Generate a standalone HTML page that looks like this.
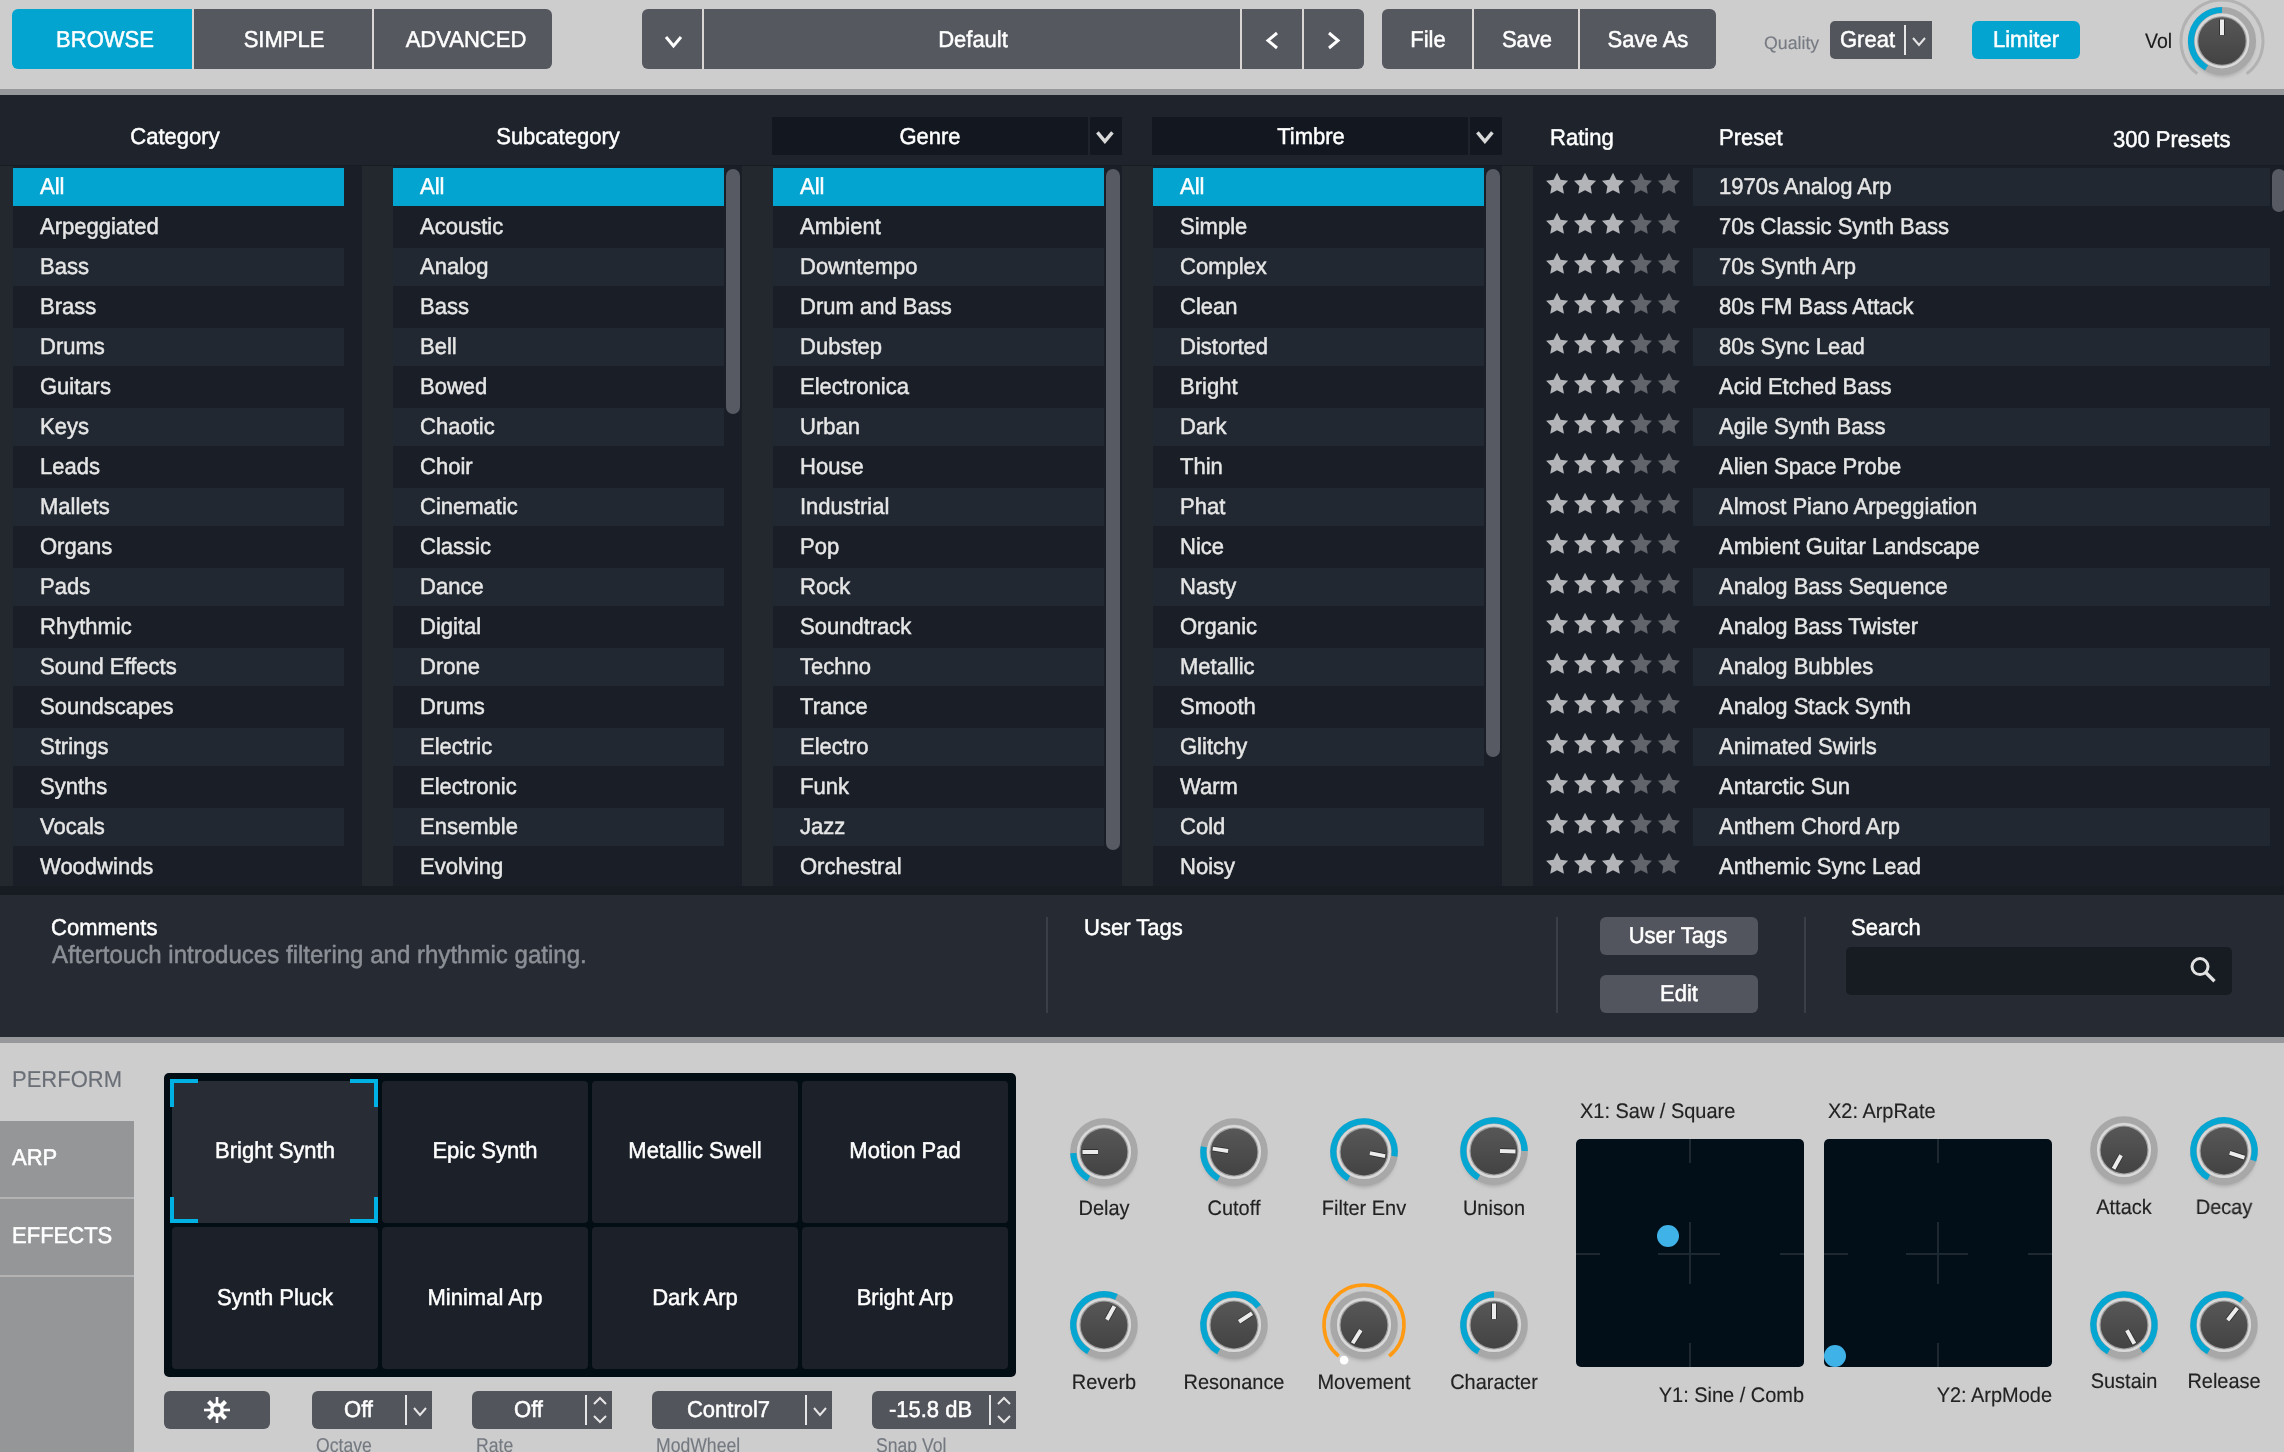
<!DOCTYPE html>
<html><head><meta charset="utf-8"><style>
html,body{margin:0;padding:0;}
body{width:2284px;height:1452px;overflow:hidden;position:relative;background:#cdcdcd;font-family:"Liberation Sans",sans-serif;}
body>div,body>svg{position:absolute;}
#tx{position:absolute;left:0;top:0;width:2284px;height:1452px;will-change:transform;}
#tx>div{position:absolute;white-space:nowrap;-webkit-text-stroke:0.5px currentColor;text-rendering:geometricPrecision;}
</style></head><body>
<div style="left:0px;top:0px;width:2284px;height:89px;background:#cdcdcd;"></div>
<div style="left:0px;top:89px;width:2284px;height:6px;background:#97989b;"></div>
<div style="left:12px;top:9px;width:180px;height:60px;background:#03a4cf;border-radius:6px 0 0 6px;"></div>
<div style="left:192px;top:9px;width:2px;height:60px;background:#d9d6d4;"></div>
<div style="left:194px;top:9px;width:178px;height:60px;background:#55585f;"></div>
<div style="left:372px;top:9px;width:2px;height:60px;background:#d9d6d4;"></div>
<div style="left:374px;top:9px;width:178px;height:60px;background:#55585f;border-radius:0 6px 6px 0;"></div>
<div style="left:642px;top:9px;width:60px;height:60px;background:#55585f;border-radius:6px 0 0 6px;"></div>
<div style="left:702px;top:9px;width:2px;height:60px;background:#d9d6d4;"></div>
<div style="left:704px;top:9px;width:536px;height:60px;background:#55585f;"></div>
<div style="left:1240px;top:9px;width:2px;height:60px;background:#d9d6d4;"></div>
<div style="left:1242px;top:9px;width:60px;height:60px;background:#55585f;"></div>
<div style="left:1302px;top:9px;width:2px;height:60px;background:#d9d6d4;"></div>
<div style="left:1304px;top:9px;width:60px;height:60px;background:#55585f;border-radius:0 6px 6px 0;"></div>
<svg style="left:662.5px;top:33.5px" width="21" height="15"><polyline points="3,3 10.5,12 18,3" fill="none" stroke="#fff" stroke-width="3" stroke-linecap="butt" stroke-linejoin="miter"/></svg>
<svg style="left:1264.5px;top:29.5px" width="15" height="21"><polyline points="12,3 3,10.5 12,18" fill="none" stroke="#fff" stroke-width="3" stroke-linecap="butt" stroke-linejoin="miter"/></svg>
<svg style="left:1325.5px;top:29.5px" width="15" height="21"><polyline points="3,3 12,10.5 3,18" fill="none" stroke="#fff" stroke-width="3" stroke-linecap="butt" stroke-linejoin="miter"/></svg>
<div style="left:1382px;top:9px;width:90px;height:60px;background:#55585f;border-radius:6px 0 0 6px;"></div>
<div style="left:1472px;top:9px;width:2px;height:60px;background:#d9d6d4;"></div>
<div style="left:1474px;top:9px;width:104px;height:60px;background:#55585f;"></div>
<div style="left:1578px;top:9px;width:2px;height:60px;background:#d9d6d4;"></div>
<div style="left:1580px;top:9px;width:136px;height:60px;background:#55585f;border-radius:0 6px 6px 0;"></div>
<div style="left:1830px;top:21px;width:102px;height:38px;background:#52555c;border-radius:5px 0 0 5px;"></div>
<div style="left:1904px;top:25px;width:2px;height:30px;background:#e6e6e6;"></div>
<svg style="left:1911.0px;top:35.5px" width="16" height="11"><polyline points="2,2 8.0,9 14,2" fill="none" stroke="#e6e6e6" stroke-width="2" stroke-linecap="butt" stroke-linejoin="miter"/></svg>
<div style="left:1972px;top:21px;width:108px;height:38px;background:#03a4cf;border-radius:6px;"></div>
<svg style="left:2172.0px;top:-9.0px" width="100" height="100" viewBox="-50.0 -50.0 100 100"><defs><linearGradient id="kg1" x1="0" y1="0" x2="0" y2="1"><stop offset="0" stop-color="#575757"/><stop offset="1" stop-color="#434343"/></linearGradient><filter id="kf1" x="-50%" y="-50%" width="200%" height="200%"><feGaussianBlur stdDeviation="2.2"/></filter></defs><path d="M-24.67,32.74 A41,41 0 1 1 24.67,32.74" fill="none" stroke="#b2b2b2" stroke-width="3"/><circle cx="0" cy="4" r="31.5" fill="#a3a3a3" filter="url(#kf1)"/><circle cx="0" cy="0" r="31" fill="none" stroke="#a8a8a8" stroke-width="6.2"/><path d="M-15.50,26.85 A31,31 0 0 1 0.00,-31.00" fill="none" stroke="#06a6d3" stroke-width="6.2"/><circle cx="0" cy="0" r="25.9" fill="none" stroke="#d9d9d9" stroke-width="3"/><circle cx="0" cy="0" r="24.2" fill="none" stroke="#a0a0a0" stroke-width="1.3"/><circle cx="0" cy="0" r="23.7" fill="url(#kg1)"/><line x1="0.00" y1="-6.00" x2="0.00" y2="-21.50" stroke="#2a2a2a" stroke-width="5.5"/><line x1="0.00" y1="-6.00" x2="0.00" y2="-21.50" stroke="#ececec" stroke-width="4"/></svg>
<div style="left:0px;top:95px;width:2284px;height:71px;background:#1e232c;"></div>
<div style="left:0px;top:165px;width:2284px;height:3px;background:#181c22;"></div>
<div style="left:0px;top:166px;width:2284px;height:720px;background:#1a1f27;"></div>
<div style="left:0px;top:166px;width:13px;height:720px;background:#23282f;"></div>
<div style="left:362px;top:166px;width:31px;height:720px;background:#23282f;"></div>
<div style="left:742px;top:166px;width:31px;height:720px;background:#23282f;"></div>
<div style="left:1122px;top:166px;width:31px;height:720px;background:#23282f;"></div>
<div style="left:1502px;top:166px;width:31px;height:720px;background:#23282f;"></div>
<div style="left:0px;top:886px;width:2284px;height:9px;background:#171b22;"></div>
<div style="left:13px;top:168px;width:331px;height:38px;background:#03a4cf;"></div>
<div style="left:13px;top:248px;width:331px;height:38px;background:#212831;"></div>
<div style="left:13px;top:328px;width:331px;height:38px;background:#212831;"></div>
<div style="left:13px;top:408px;width:331px;height:38px;background:#212831;"></div>
<div style="left:13px;top:488px;width:331px;height:38px;background:#212831;"></div>
<div style="left:13px;top:568px;width:331px;height:38px;background:#212831;"></div>
<div style="left:13px;top:648px;width:331px;height:38px;background:#212831;"></div>
<div style="left:13px;top:728px;width:331px;height:38px;background:#212831;"></div>
<div style="left:13px;top:808px;width:331px;height:38px;background:#212831;"></div>
<div style="left:393px;top:168px;width:331px;height:38px;background:#03a4cf;"></div>
<div style="left:393px;top:248px;width:331px;height:38px;background:#212831;"></div>
<div style="left:393px;top:328px;width:331px;height:38px;background:#212831;"></div>
<div style="left:393px;top:408px;width:331px;height:38px;background:#212831;"></div>
<div style="left:393px;top:488px;width:331px;height:38px;background:#212831;"></div>
<div style="left:393px;top:568px;width:331px;height:38px;background:#212831;"></div>
<div style="left:393px;top:648px;width:331px;height:38px;background:#212831;"></div>
<div style="left:393px;top:728px;width:331px;height:38px;background:#212831;"></div>
<div style="left:393px;top:808px;width:331px;height:38px;background:#212831;"></div>
<div style="left:773px;top:168px;width:331px;height:38px;background:#03a4cf;"></div>
<div style="left:773px;top:248px;width:331px;height:38px;background:#212831;"></div>
<div style="left:773px;top:328px;width:331px;height:38px;background:#212831;"></div>
<div style="left:773px;top:408px;width:331px;height:38px;background:#212831;"></div>
<div style="left:773px;top:488px;width:331px;height:38px;background:#212831;"></div>
<div style="left:773px;top:568px;width:331px;height:38px;background:#212831;"></div>
<div style="left:773px;top:648px;width:331px;height:38px;background:#212831;"></div>
<div style="left:773px;top:728px;width:331px;height:38px;background:#212831;"></div>
<div style="left:773px;top:808px;width:331px;height:38px;background:#212831;"></div>
<div style="left:1153px;top:168px;width:331px;height:38px;background:#03a4cf;"></div>
<div style="left:1153px;top:248px;width:331px;height:38px;background:#212831;"></div>
<div style="left:1153px;top:328px;width:331px;height:38px;background:#212831;"></div>
<div style="left:1153px;top:408px;width:331px;height:38px;background:#212831;"></div>
<div style="left:1153px;top:488px;width:331px;height:38px;background:#212831;"></div>
<div style="left:1153px;top:568px;width:331px;height:38px;background:#212831;"></div>
<div style="left:1153px;top:648px;width:331px;height:38px;background:#212831;"></div>
<div style="left:1153px;top:728px;width:331px;height:38px;background:#212831;"></div>
<div style="left:1153px;top:808px;width:331px;height:38px;background:#212831;"></div>
<div style="left:1693px;top:168px;width:577px;height:38px;background:#212831;"></div>
<div style="left:1693px;top:248px;width:577px;height:38px;background:#212831;"></div>
<div style="left:1693px;top:328px;width:577px;height:38px;background:#212831;"></div>
<div style="left:1693px;top:408px;width:577px;height:38px;background:#212831;"></div>
<div style="left:1693px;top:488px;width:577px;height:38px;background:#212831;"></div>
<div style="left:1693px;top:568px;width:577px;height:38px;background:#212831;"></div>
<div style="left:1693px;top:648px;width:577px;height:38px;background:#212831;"></div>
<div style="left:1693px;top:728px;width:577px;height:38px;background:#212831;"></div>
<div style="left:1693px;top:808px;width:577px;height:38px;background:#212831;"></div>
<div style="left:726px;top:169px;width:14px;height:245px;background:#575a62;border-radius:7px;"></div>
<div style="left:1106px;top:169px;width:14px;height:681px;background:#575a62;border-radius:7px;"></div>
<div style="left:1486px;top:169px;width:14px;height:588px;background:#575a62;border-radius:7px;"></div>
<div style="left:2272px;top:169px;width:14px;height:43px;background:#575a62;border-radius:7px;"></div>
<svg style="left:1533px;top:166px" width="160" height="720"><path d="M24.10,6.80 L27.57,13.63 L35.13,14.82 L29.71,20.22 L30.92,27.78 L24.10,24.30 L17.28,27.78 L18.49,20.22 L13.07,14.82 L20.63,13.63Z" fill="#b3b4b8"/><path d="M52.05,6.80 L55.52,13.63 L63.08,14.82 L57.66,20.22 L58.87,27.78 L52.05,24.30 L45.23,27.78 L46.44,20.22 L41.02,14.82 L48.58,13.63Z" fill="#b3b4b8"/><path d="M80.00,6.80 L83.47,13.63 L91.03,14.82 L85.61,20.22 L86.82,27.78 L80.00,24.30 L73.18,27.78 L74.39,20.22 L68.97,14.82 L76.53,13.63Z" fill="#b3b4b8"/><path d="M107.95,6.80 L111.42,13.63 L118.98,14.82 L113.56,20.22 L114.77,27.78 L107.95,24.30 L101.13,27.78 L102.34,20.22 L96.92,14.82 L104.48,13.63Z" fill="#62656c"/><path d="M135.90,6.80 L139.37,13.63 L146.93,14.82 L141.51,20.22 L142.72,27.78 L135.90,24.30 L129.08,27.78 L130.29,20.22 L124.87,14.82 L132.43,13.63Z" fill="#62656c"/><path d="M24.10,46.80 L27.57,53.63 L35.13,54.82 L29.71,60.22 L30.92,67.78 L24.10,64.30 L17.28,67.78 L18.49,60.22 L13.07,54.82 L20.63,53.63Z" fill="#b3b4b8"/><path d="M52.05,46.80 L55.52,53.63 L63.08,54.82 L57.66,60.22 L58.87,67.78 L52.05,64.30 L45.23,67.78 L46.44,60.22 L41.02,54.82 L48.58,53.63Z" fill="#b3b4b8"/><path d="M80.00,46.80 L83.47,53.63 L91.03,54.82 L85.61,60.22 L86.82,67.78 L80.00,64.30 L73.18,67.78 L74.39,60.22 L68.97,54.82 L76.53,53.63Z" fill="#b3b4b8"/><path d="M107.95,46.80 L111.42,53.63 L118.98,54.82 L113.56,60.22 L114.77,67.78 L107.95,64.30 L101.13,67.78 L102.34,60.22 L96.92,54.82 L104.48,53.63Z" fill="#62656c"/><path d="M135.90,46.80 L139.37,53.63 L146.93,54.82 L141.51,60.22 L142.72,67.78 L135.90,64.30 L129.08,67.78 L130.29,60.22 L124.87,54.82 L132.43,53.63Z" fill="#62656c"/><path d="M24.10,86.80 L27.57,93.63 L35.13,94.82 L29.71,100.22 L30.92,107.78 L24.10,104.30 L17.28,107.78 L18.49,100.22 L13.07,94.82 L20.63,93.63Z" fill="#b3b4b8"/><path d="M52.05,86.80 L55.52,93.63 L63.08,94.82 L57.66,100.22 L58.87,107.78 L52.05,104.30 L45.23,107.78 L46.44,100.22 L41.02,94.82 L48.58,93.63Z" fill="#b3b4b8"/><path d="M80.00,86.80 L83.47,93.63 L91.03,94.82 L85.61,100.22 L86.82,107.78 L80.00,104.30 L73.18,107.78 L74.39,100.22 L68.97,94.82 L76.53,93.63Z" fill="#b3b4b8"/><path d="M107.95,86.80 L111.42,93.63 L118.98,94.82 L113.56,100.22 L114.77,107.78 L107.95,104.30 L101.13,107.78 L102.34,100.22 L96.92,94.82 L104.48,93.63Z" fill="#62656c"/><path d="M135.90,86.80 L139.37,93.63 L146.93,94.82 L141.51,100.22 L142.72,107.78 L135.90,104.30 L129.08,107.78 L130.29,100.22 L124.87,94.82 L132.43,93.63Z" fill="#62656c"/><path d="M24.10,126.80 L27.57,133.63 L35.13,134.82 L29.71,140.22 L30.92,147.78 L24.10,144.30 L17.28,147.78 L18.49,140.22 L13.07,134.82 L20.63,133.63Z" fill="#b3b4b8"/><path d="M52.05,126.80 L55.52,133.63 L63.08,134.82 L57.66,140.22 L58.87,147.78 L52.05,144.30 L45.23,147.78 L46.44,140.22 L41.02,134.82 L48.58,133.63Z" fill="#b3b4b8"/><path d="M80.00,126.80 L83.47,133.63 L91.03,134.82 L85.61,140.22 L86.82,147.78 L80.00,144.30 L73.18,147.78 L74.39,140.22 L68.97,134.82 L76.53,133.63Z" fill="#b3b4b8"/><path d="M107.95,126.80 L111.42,133.63 L118.98,134.82 L113.56,140.22 L114.77,147.78 L107.95,144.30 L101.13,147.78 L102.34,140.22 L96.92,134.82 L104.48,133.63Z" fill="#62656c"/><path d="M135.90,126.80 L139.37,133.63 L146.93,134.82 L141.51,140.22 L142.72,147.78 L135.90,144.30 L129.08,147.78 L130.29,140.22 L124.87,134.82 L132.43,133.63Z" fill="#62656c"/><path d="M24.10,166.80 L27.57,173.63 L35.13,174.82 L29.71,180.22 L30.92,187.78 L24.10,184.30 L17.28,187.78 L18.49,180.22 L13.07,174.82 L20.63,173.63Z" fill="#b3b4b8"/><path d="M52.05,166.80 L55.52,173.63 L63.08,174.82 L57.66,180.22 L58.87,187.78 L52.05,184.30 L45.23,187.78 L46.44,180.22 L41.02,174.82 L48.58,173.63Z" fill="#b3b4b8"/><path d="M80.00,166.80 L83.47,173.63 L91.03,174.82 L85.61,180.22 L86.82,187.78 L80.00,184.30 L73.18,187.78 L74.39,180.22 L68.97,174.82 L76.53,173.63Z" fill="#b3b4b8"/><path d="M107.95,166.80 L111.42,173.63 L118.98,174.82 L113.56,180.22 L114.77,187.78 L107.95,184.30 L101.13,187.78 L102.34,180.22 L96.92,174.82 L104.48,173.63Z" fill="#62656c"/><path d="M135.90,166.80 L139.37,173.63 L146.93,174.82 L141.51,180.22 L142.72,187.78 L135.90,184.30 L129.08,187.78 L130.29,180.22 L124.87,174.82 L132.43,173.63Z" fill="#62656c"/><path d="M24.10,206.80 L27.57,213.63 L35.13,214.82 L29.71,220.22 L30.92,227.78 L24.10,224.30 L17.28,227.78 L18.49,220.22 L13.07,214.82 L20.63,213.63Z" fill="#b3b4b8"/><path d="M52.05,206.80 L55.52,213.63 L63.08,214.82 L57.66,220.22 L58.87,227.78 L52.05,224.30 L45.23,227.78 L46.44,220.22 L41.02,214.82 L48.58,213.63Z" fill="#b3b4b8"/><path d="M80.00,206.80 L83.47,213.63 L91.03,214.82 L85.61,220.22 L86.82,227.78 L80.00,224.30 L73.18,227.78 L74.39,220.22 L68.97,214.82 L76.53,213.63Z" fill="#b3b4b8"/><path d="M107.95,206.80 L111.42,213.63 L118.98,214.82 L113.56,220.22 L114.77,227.78 L107.95,224.30 L101.13,227.78 L102.34,220.22 L96.92,214.82 L104.48,213.63Z" fill="#62656c"/><path d="M135.90,206.80 L139.37,213.63 L146.93,214.82 L141.51,220.22 L142.72,227.78 L135.90,224.30 L129.08,227.78 L130.29,220.22 L124.87,214.82 L132.43,213.63Z" fill="#62656c"/><path d="M24.10,246.80 L27.57,253.63 L35.13,254.82 L29.71,260.22 L30.92,267.78 L24.10,264.30 L17.28,267.78 L18.49,260.22 L13.07,254.82 L20.63,253.63Z" fill="#b3b4b8"/><path d="M52.05,246.80 L55.52,253.63 L63.08,254.82 L57.66,260.22 L58.87,267.78 L52.05,264.30 L45.23,267.78 L46.44,260.22 L41.02,254.82 L48.58,253.63Z" fill="#b3b4b8"/><path d="M80.00,246.80 L83.47,253.63 L91.03,254.82 L85.61,260.22 L86.82,267.78 L80.00,264.30 L73.18,267.78 L74.39,260.22 L68.97,254.82 L76.53,253.63Z" fill="#b3b4b8"/><path d="M107.95,246.80 L111.42,253.63 L118.98,254.82 L113.56,260.22 L114.77,267.78 L107.95,264.30 L101.13,267.78 L102.34,260.22 L96.92,254.82 L104.48,253.63Z" fill="#62656c"/><path d="M135.90,246.80 L139.37,253.63 L146.93,254.82 L141.51,260.22 L142.72,267.78 L135.90,264.30 L129.08,267.78 L130.29,260.22 L124.87,254.82 L132.43,253.63Z" fill="#62656c"/><path d="M24.10,286.80 L27.57,293.63 L35.13,294.82 L29.71,300.22 L30.92,307.78 L24.10,304.30 L17.28,307.78 L18.49,300.22 L13.07,294.82 L20.63,293.63Z" fill="#b3b4b8"/><path d="M52.05,286.80 L55.52,293.63 L63.08,294.82 L57.66,300.22 L58.87,307.78 L52.05,304.30 L45.23,307.78 L46.44,300.22 L41.02,294.82 L48.58,293.63Z" fill="#b3b4b8"/><path d="M80.00,286.80 L83.47,293.63 L91.03,294.82 L85.61,300.22 L86.82,307.78 L80.00,304.30 L73.18,307.78 L74.39,300.22 L68.97,294.82 L76.53,293.63Z" fill="#b3b4b8"/><path d="M107.95,286.80 L111.42,293.63 L118.98,294.82 L113.56,300.22 L114.77,307.78 L107.95,304.30 L101.13,307.78 L102.34,300.22 L96.92,294.82 L104.48,293.63Z" fill="#62656c"/><path d="M135.90,286.80 L139.37,293.63 L146.93,294.82 L141.51,300.22 L142.72,307.78 L135.90,304.30 L129.08,307.78 L130.29,300.22 L124.87,294.82 L132.43,293.63Z" fill="#62656c"/><path d="M24.10,326.80 L27.57,333.63 L35.13,334.82 L29.71,340.22 L30.92,347.78 L24.10,344.30 L17.28,347.78 L18.49,340.22 L13.07,334.82 L20.63,333.63Z" fill="#b3b4b8"/><path d="M52.05,326.80 L55.52,333.63 L63.08,334.82 L57.66,340.22 L58.87,347.78 L52.05,344.30 L45.23,347.78 L46.44,340.22 L41.02,334.82 L48.58,333.63Z" fill="#b3b4b8"/><path d="M80.00,326.80 L83.47,333.63 L91.03,334.82 L85.61,340.22 L86.82,347.78 L80.00,344.30 L73.18,347.78 L74.39,340.22 L68.97,334.82 L76.53,333.63Z" fill="#b3b4b8"/><path d="M107.95,326.80 L111.42,333.63 L118.98,334.82 L113.56,340.22 L114.77,347.78 L107.95,344.30 L101.13,347.78 L102.34,340.22 L96.92,334.82 L104.48,333.63Z" fill="#62656c"/><path d="M135.90,326.80 L139.37,333.63 L146.93,334.82 L141.51,340.22 L142.72,347.78 L135.90,344.30 L129.08,347.78 L130.29,340.22 L124.87,334.82 L132.43,333.63Z" fill="#62656c"/><path d="M24.10,366.80 L27.57,373.63 L35.13,374.82 L29.71,380.22 L30.92,387.78 L24.10,384.30 L17.28,387.78 L18.49,380.22 L13.07,374.82 L20.63,373.63Z" fill="#b3b4b8"/><path d="M52.05,366.80 L55.52,373.63 L63.08,374.82 L57.66,380.22 L58.87,387.78 L52.05,384.30 L45.23,387.78 L46.44,380.22 L41.02,374.82 L48.58,373.63Z" fill="#b3b4b8"/><path d="M80.00,366.80 L83.47,373.63 L91.03,374.82 L85.61,380.22 L86.82,387.78 L80.00,384.30 L73.18,387.78 L74.39,380.22 L68.97,374.82 L76.53,373.63Z" fill="#b3b4b8"/><path d="M107.95,366.80 L111.42,373.63 L118.98,374.82 L113.56,380.22 L114.77,387.78 L107.95,384.30 L101.13,387.78 L102.34,380.22 L96.92,374.82 L104.48,373.63Z" fill="#62656c"/><path d="M135.90,366.80 L139.37,373.63 L146.93,374.82 L141.51,380.22 L142.72,387.78 L135.90,384.30 L129.08,387.78 L130.29,380.22 L124.87,374.82 L132.43,373.63Z" fill="#62656c"/><path d="M24.10,406.80 L27.57,413.63 L35.13,414.82 L29.71,420.22 L30.92,427.78 L24.10,424.30 L17.28,427.78 L18.49,420.22 L13.07,414.82 L20.63,413.63Z" fill="#b3b4b8"/><path d="M52.05,406.80 L55.52,413.63 L63.08,414.82 L57.66,420.22 L58.87,427.78 L52.05,424.30 L45.23,427.78 L46.44,420.22 L41.02,414.82 L48.58,413.63Z" fill="#b3b4b8"/><path d="M80.00,406.80 L83.47,413.63 L91.03,414.82 L85.61,420.22 L86.82,427.78 L80.00,424.30 L73.18,427.78 L74.39,420.22 L68.97,414.82 L76.53,413.63Z" fill="#b3b4b8"/><path d="M107.95,406.80 L111.42,413.63 L118.98,414.82 L113.56,420.22 L114.77,427.78 L107.95,424.30 L101.13,427.78 L102.34,420.22 L96.92,414.82 L104.48,413.63Z" fill="#62656c"/><path d="M135.90,406.80 L139.37,413.63 L146.93,414.82 L141.51,420.22 L142.72,427.78 L135.90,424.30 L129.08,427.78 L130.29,420.22 L124.87,414.82 L132.43,413.63Z" fill="#62656c"/><path d="M24.10,446.80 L27.57,453.63 L35.13,454.82 L29.71,460.22 L30.92,467.78 L24.10,464.30 L17.28,467.78 L18.49,460.22 L13.07,454.82 L20.63,453.63Z" fill="#b3b4b8"/><path d="M52.05,446.80 L55.52,453.63 L63.08,454.82 L57.66,460.22 L58.87,467.78 L52.05,464.30 L45.23,467.78 L46.44,460.22 L41.02,454.82 L48.58,453.63Z" fill="#b3b4b8"/><path d="M80.00,446.80 L83.47,453.63 L91.03,454.82 L85.61,460.22 L86.82,467.78 L80.00,464.30 L73.18,467.78 L74.39,460.22 L68.97,454.82 L76.53,453.63Z" fill="#b3b4b8"/><path d="M107.95,446.80 L111.42,453.63 L118.98,454.82 L113.56,460.22 L114.77,467.78 L107.95,464.30 L101.13,467.78 L102.34,460.22 L96.92,454.82 L104.48,453.63Z" fill="#62656c"/><path d="M135.90,446.80 L139.37,453.63 L146.93,454.82 L141.51,460.22 L142.72,467.78 L135.90,464.30 L129.08,467.78 L130.29,460.22 L124.87,454.82 L132.43,453.63Z" fill="#62656c"/><path d="M24.10,486.80 L27.57,493.63 L35.13,494.82 L29.71,500.22 L30.92,507.78 L24.10,504.30 L17.28,507.78 L18.49,500.22 L13.07,494.82 L20.63,493.63Z" fill="#b3b4b8"/><path d="M52.05,486.80 L55.52,493.63 L63.08,494.82 L57.66,500.22 L58.87,507.78 L52.05,504.30 L45.23,507.78 L46.44,500.22 L41.02,494.82 L48.58,493.63Z" fill="#b3b4b8"/><path d="M80.00,486.80 L83.47,493.63 L91.03,494.82 L85.61,500.22 L86.82,507.78 L80.00,504.30 L73.18,507.78 L74.39,500.22 L68.97,494.82 L76.53,493.63Z" fill="#b3b4b8"/><path d="M107.95,486.80 L111.42,493.63 L118.98,494.82 L113.56,500.22 L114.77,507.78 L107.95,504.30 L101.13,507.78 L102.34,500.22 L96.92,494.82 L104.48,493.63Z" fill="#62656c"/><path d="M135.90,486.80 L139.37,493.63 L146.93,494.82 L141.51,500.22 L142.72,507.78 L135.90,504.30 L129.08,507.78 L130.29,500.22 L124.87,494.82 L132.43,493.63Z" fill="#62656c"/><path d="M24.10,526.80 L27.57,533.63 L35.13,534.82 L29.71,540.22 L30.92,547.78 L24.10,544.30 L17.28,547.78 L18.49,540.22 L13.07,534.82 L20.63,533.63Z" fill="#b3b4b8"/><path d="M52.05,526.80 L55.52,533.63 L63.08,534.82 L57.66,540.22 L58.87,547.78 L52.05,544.30 L45.23,547.78 L46.44,540.22 L41.02,534.82 L48.58,533.63Z" fill="#b3b4b8"/><path d="M80.00,526.80 L83.47,533.63 L91.03,534.82 L85.61,540.22 L86.82,547.78 L80.00,544.30 L73.18,547.78 L74.39,540.22 L68.97,534.82 L76.53,533.63Z" fill="#b3b4b8"/><path d="M107.95,526.80 L111.42,533.63 L118.98,534.82 L113.56,540.22 L114.77,547.78 L107.95,544.30 L101.13,547.78 L102.34,540.22 L96.92,534.82 L104.48,533.63Z" fill="#62656c"/><path d="M135.90,526.80 L139.37,533.63 L146.93,534.82 L141.51,540.22 L142.72,547.78 L135.90,544.30 L129.08,547.78 L130.29,540.22 L124.87,534.82 L132.43,533.63Z" fill="#62656c"/><path d="M24.10,566.80 L27.57,573.63 L35.13,574.82 L29.71,580.22 L30.92,587.78 L24.10,584.30 L17.28,587.78 L18.49,580.22 L13.07,574.82 L20.63,573.63Z" fill="#b3b4b8"/><path d="M52.05,566.80 L55.52,573.63 L63.08,574.82 L57.66,580.22 L58.87,587.78 L52.05,584.30 L45.23,587.78 L46.44,580.22 L41.02,574.82 L48.58,573.63Z" fill="#b3b4b8"/><path d="M80.00,566.80 L83.47,573.63 L91.03,574.82 L85.61,580.22 L86.82,587.78 L80.00,584.30 L73.18,587.78 L74.39,580.22 L68.97,574.82 L76.53,573.63Z" fill="#b3b4b8"/><path d="M107.95,566.80 L111.42,573.63 L118.98,574.82 L113.56,580.22 L114.77,587.78 L107.95,584.30 L101.13,587.78 L102.34,580.22 L96.92,574.82 L104.48,573.63Z" fill="#62656c"/><path d="M135.90,566.80 L139.37,573.63 L146.93,574.82 L141.51,580.22 L142.72,587.78 L135.90,584.30 L129.08,587.78 L130.29,580.22 L124.87,574.82 L132.43,573.63Z" fill="#62656c"/><path d="M24.10,606.80 L27.57,613.63 L35.13,614.82 L29.71,620.22 L30.92,627.78 L24.10,624.30 L17.28,627.78 L18.49,620.22 L13.07,614.82 L20.63,613.63Z" fill="#b3b4b8"/><path d="M52.05,606.80 L55.52,613.63 L63.08,614.82 L57.66,620.22 L58.87,627.78 L52.05,624.30 L45.23,627.78 L46.44,620.22 L41.02,614.82 L48.58,613.63Z" fill="#b3b4b8"/><path d="M80.00,606.80 L83.47,613.63 L91.03,614.82 L85.61,620.22 L86.82,627.78 L80.00,624.30 L73.18,627.78 L74.39,620.22 L68.97,614.82 L76.53,613.63Z" fill="#b3b4b8"/><path d="M107.95,606.80 L111.42,613.63 L118.98,614.82 L113.56,620.22 L114.77,627.78 L107.95,624.30 L101.13,627.78 L102.34,620.22 L96.92,614.82 L104.48,613.63Z" fill="#62656c"/><path d="M135.90,606.80 L139.37,613.63 L146.93,614.82 L141.51,620.22 L142.72,627.78 L135.90,624.30 L129.08,627.78 L130.29,620.22 L124.87,614.82 L132.43,613.63Z" fill="#62656c"/><path d="M24.10,646.80 L27.57,653.63 L35.13,654.82 L29.71,660.22 L30.92,667.78 L24.10,664.30 L17.28,667.78 L18.49,660.22 L13.07,654.82 L20.63,653.63Z" fill="#b3b4b8"/><path d="M52.05,646.80 L55.52,653.63 L63.08,654.82 L57.66,660.22 L58.87,667.78 L52.05,664.30 L45.23,667.78 L46.44,660.22 L41.02,654.82 L48.58,653.63Z" fill="#b3b4b8"/><path d="M80.00,646.80 L83.47,653.63 L91.03,654.82 L85.61,660.22 L86.82,667.78 L80.00,664.30 L73.18,667.78 L74.39,660.22 L68.97,654.82 L76.53,653.63Z" fill="#b3b4b8"/><path d="M107.95,646.80 L111.42,653.63 L118.98,654.82 L113.56,660.22 L114.77,667.78 L107.95,664.30 L101.13,667.78 L102.34,660.22 L96.92,654.82 L104.48,653.63Z" fill="#62656c"/><path d="M135.90,646.80 L139.37,653.63 L146.93,654.82 L141.51,660.22 L142.72,667.78 L135.90,664.30 L129.08,667.78 L130.29,660.22 L124.87,654.82 L132.43,653.63Z" fill="#62656c"/><path d="M24.10,686.80 L27.57,693.63 L35.13,694.82 L29.71,700.22 L30.92,707.78 L24.10,704.30 L17.28,707.78 L18.49,700.22 L13.07,694.82 L20.63,693.63Z" fill="#b3b4b8"/><path d="M52.05,686.80 L55.52,693.63 L63.08,694.82 L57.66,700.22 L58.87,707.78 L52.05,704.30 L45.23,707.78 L46.44,700.22 L41.02,694.82 L48.58,693.63Z" fill="#b3b4b8"/><path d="M80.00,686.80 L83.47,693.63 L91.03,694.82 L85.61,700.22 L86.82,707.78 L80.00,704.30 L73.18,707.78 L74.39,700.22 L68.97,694.82 L76.53,693.63Z" fill="#b3b4b8"/><path d="M107.95,686.80 L111.42,693.63 L118.98,694.82 L113.56,700.22 L114.77,707.78 L107.95,704.30 L101.13,707.78 L102.34,700.22 L96.92,694.82 L104.48,693.63Z" fill="#62656c"/><path d="M135.90,686.80 L139.37,693.63 L146.93,694.82 L141.51,700.22 L142.72,707.78 L135.90,704.30 L129.08,707.78 L130.29,700.22 L124.87,694.82 L132.43,693.63Z" fill="#62656c"/></svg>
<div style="left:772px;top:117px;width:316px;height:38px;background:#131820;"></div>
<div style="left:1090px;top:117px;width:32px;height:38px;background:#131820;"></div>
<svg style="left:1094.1px;top:128.6px" width="21.8" height="15.8"><polyline points="3.4,3.4 10.9,12.4 18.4,3.4" fill="none" stroke="#d9d9d9" stroke-width="3.4" stroke-linecap="butt" stroke-linejoin="miter"/></svg>
<div style="left:1152px;top:117px;width:316px;height:38px;background:#131820;"></div>
<div style="left:1470px;top:117px;width:32px;height:38px;background:#131820;"></div>
<svg style="left:1474.1px;top:128.6px" width="21.8" height="15.8"><polyline points="3.4,3.4 10.9,12.4 18.4,3.4" fill="none" stroke="#d9d9d9" stroke-width="3.4" stroke-linecap="butt" stroke-linejoin="miter"/></svg>
<div style="left:0px;top:895px;width:2284px;height:142px;background:#252a33;"></div>
<div style="left:1046px;top:917px;width:2px;height:96px;background:#393e47;"></div>
<div style="left:1556px;top:917px;width:2px;height:96px;background:#393e47;"></div>
<div style="left:1804px;top:917px;width:2px;height:96px;background:#393e47;"></div>
<div style="left:1600px;top:917px;width:158px;height:38px;background:#52555d;border-radius:6px;"></div>
<div style="left:1600px;top:975px;width:158px;height:38px;background:#52555d;border-radius:6px;"></div>
<div style="left:1846px;top:947px;width:386px;height:48px;background:#171c23;border-radius:5px;"></div>
<svg style="left:2184px;top:950px" width="40" height="40"><circle cx="16" cy="16.6" r="8" fill="none" stroke="#e2e2e2" stroke-width="3"/><line x1="21.5" y1="22.2" x2="30.5" y2="31.2" stroke="#e2e2e2" stroke-width="3.4"/></svg>
<div style="left:0px;top:1037px;width:2284px;height:6px;background:#97989b;"></div>
<div style="left:0px;top:1043px;width:2284px;height:409px;background:#cdcdcd;"></div>
<div style="left:0px;top:1121px;width:134px;height:331px;background:#959698;"></div>
<div style="left:0px;top:1197px;width:134px;height:2px;background:#b3b3b4;"></div>
<div style="left:0px;top:1275px;width:134px;height:2px;background:#b3b3b4;"></div>
<div style="left:164px;top:1073px;width:852px;height:304px;background:#020d14;border-radius:5px;"></div>
<div style="left:172px;top:1081px;width:206px;height:142px;background:#282c35;border-radius:4px;"></div>
<div style="left:382px;top:1081px;width:206px;height:142px;background:#1c2028;border-radius:4px;"></div>
<div style="left:592px;top:1081px;width:206px;height:142px;background:#1c2028;border-radius:4px;"></div>
<div style="left:802px;top:1081px;width:206px;height:142px;background:#1c2028;border-radius:4px;"></div>
<div style="left:172px;top:1227px;width:206px;height:142px;background:#1c2028;border-radius:4px;"></div>
<div style="left:382px;top:1227px;width:206px;height:142px;background:#1c2028;border-radius:4px;"></div>
<div style="left:592px;top:1227px;width:206px;height:142px;background:#1c2028;border-radius:4px;"></div>
<div style="left:802px;top:1227px;width:206px;height:142px;background:#1c2028;border-radius:4px;"></div>
<svg style="left:168px;top:1077px" width="214" height="150"><g fill="none" stroke="#00b2e3" stroke-width="4" stroke-linejoin="miter"><path d="M4,30 V4 H30"/><path d="M182,4 H208 V30"/><path d="M4,120 V144 H30"/><path d="M182,144 H208 V120"/></g></svg>
<div style="left:164px;top:1391px;width:106px;height:38px;background:#52555c;border-radius:6px;"></div>
<svg style="left:199px;top:1392px" width="36" height="36" viewBox="-18 -18 36 36"><g fill="#fff"><rect x="-1.3" y="-13" width="2.6" height="7" transform="rotate(0)"/><rect x="-1.3" y="-13" width="2.6" height="7" transform="rotate(90)"/><rect x="-1.3" y="-13" width="2.6" height="7" transform="rotate(180)"/><rect x="-1.3" y="-13" width="2.6" height="7" transform="rotate(270)"/><rect x="-2.1" y="-12" width="4.2" height="5.5" transform="rotate(45)"/><rect x="-2.1" y="-12" width="4.2" height="5.5" transform="rotate(135)"/><rect x="-2.1" y="-12" width="4.2" height="5.5" transform="rotate(225)"/><rect x="-2.1" y="-12" width="4.2" height="5.5" transform="rotate(315)"/></g><circle r="5.2" fill="none" stroke="#fff" stroke-width="3.6"/></svg>
<div style="left:312px;top:1391px;width:120px;height:38px;background:#52555c;border-radius:6px 0 0 6px;"></div>
<div style="left:405px;top:1395px;width:2px;height:30px;background:#e6e6e6;"></div>
<svg style="left:411.5px;top:1405.5px" width="16" height="11"><polyline points="2,2 8.0,9 14,2" fill="none" stroke="#e6e6e6" stroke-width="2" stroke-linecap="butt" stroke-linejoin="miter"/></svg>
<div style="left:472px;top:1391px;width:140px;height:38px;background:#52555c;border-radius:6px 0 0 6px;"></div>
<div style="left:585px;top:1395px;width:2px;height:30px;background:#e6e6e6;"></div>
<svg style="left:591.5px;top:1396.0px" width="16" height="10"><polyline points="2,8 8.0,2 14,8" fill="none" stroke="#e6e6e6" stroke-width="2" stroke-linecap="butt" stroke-linejoin="miter"/></svg>
<svg style="left:591.5px;top:1414.0px" width="16" height="10"><polyline points="2,2 8.0,8 14,2" fill="none" stroke="#e6e6e6" stroke-width="2" stroke-linecap="butt" stroke-linejoin="miter"/></svg>
<div style="left:652px;top:1391px;width:180px;height:38px;background:#52555c;border-radius:6px 0 0 6px;"></div>
<div style="left:805px;top:1395px;width:2px;height:30px;background:#e6e6e6;"></div>
<svg style="left:811.5px;top:1405.5px" width="16" height="11"><polyline points="2,2 8.0,9 14,2" fill="none" stroke="#e6e6e6" stroke-width="2" stroke-linecap="butt" stroke-linejoin="miter"/></svg>
<div style="left:872px;top:1391px;width:144px;height:38px;background:#52555c;border-radius:6px 0 0 6px;"></div>
<div style="left:989px;top:1395px;width:2px;height:30px;background:#e6e6e6;"></div>
<svg style="left:995.5px;top:1396.0px" width="16" height="10"><polyline points="2,8 8.0,2 14,8" fill="none" stroke="#e6e6e6" stroke-width="2" stroke-linecap="butt" stroke-linejoin="miter"/></svg>
<svg style="left:995.5px;top:1414.0px" width="16" height="10"><polyline points="2,2 8.0,8 14,2" fill="none" stroke="#e6e6e6" stroke-width="2" stroke-linecap="butt" stroke-linejoin="miter"/></svg>
<svg style="left:1054.0px;top:1101.5px" width="100" height="100" viewBox="-50.0 -50.0 100 100"><defs><linearGradient id="kg2" x1="0" y1="0" x2="0" y2="1"><stop offset="0" stop-color="#575757"/><stop offset="1" stop-color="#434343"/></linearGradient><filter id="kf2" x="-50%" y="-50%" width="200%" height="200%"><feGaussianBlur stdDeviation="2.2"/></filter></defs><circle cx="0" cy="4" r="31.2" fill="#a3a3a3" filter="url(#kf2)"/><circle cx="0" cy="0" r="30.7" fill="none" stroke="#a8a8a8" stroke-width="6.2"/><path d="M-15.35,26.59 A30.7,30.7 0 0 1 -30.68,1.07" fill="none" stroke="#06a6d3" stroke-width="6.2"/><circle cx="0" cy="0" r="25.599999999999998" fill="none" stroke="#d9d9d9" stroke-width="3"/><circle cx="0" cy="0" r="23.9" fill="none" stroke="#a0a0a0" stroke-width="1.3"/><circle cx="0" cy="0" r="23.4" fill="url(#kg2)"/><line x1="-6.00" y1="-0.00" x2="-21.50" y2="-0.00" stroke="#2a2a2a" stroke-width="5.5"/><line x1="-6.00" y1="-0.00" x2="-21.50" y2="-0.00" stroke="#ececec" stroke-width="4"/></svg>
<svg style="left:1184.0px;top:1101.5px" width="100" height="100" viewBox="-50.0 -50.0 100 100"><defs><linearGradient id="kg3" x1="0" y1="0" x2="0" y2="1"><stop offset="0" stop-color="#575757"/><stop offset="1" stop-color="#434343"/></linearGradient><filter id="kf3" x="-50%" y="-50%" width="200%" height="200%"><feGaussianBlur stdDeviation="2.2"/></filter></defs><circle cx="0" cy="4" r="31.2" fill="#a3a3a3" filter="url(#kf3)"/><circle cx="0" cy="0" r="30.7" fill="none" stroke="#a8a8a8" stroke-width="6.2"/><path d="M-15.35,26.59 A30.7,30.7 0 0 1 -30.23,-5.33" fill="none" stroke="#06a6d3" stroke-width="6.2"/><circle cx="0" cy="0" r="25.599999999999998" fill="none" stroke="#d9d9d9" stroke-width="3"/><circle cx="0" cy="0" r="23.9" fill="none" stroke="#a0a0a0" stroke-width="1.3"/><circle cx="0" cy="0" r="23.4" fill="url(#kg3)"/><line x1="-5.93" y1="-0.94" x2="-21.24" y2="-3.36" stroke="#2a2a2a" stroke-width="5.5"/><line x1="-5.93" y1="-0.94" x2="-21.24" y2="-3.36" stroke="#ececec" stroke-width="4"/></svg>
<svg style="left:1314.0px;top:1101.5px" width="100" height="100" viewBox="-50.0 -50.0 100 100"><defs><linearGradient id="kg4" x1="0" y1="0" x2="0" y2="1"><stop offset="0" stop-color="#575757"/><stop offset="1" stop-color="#434343"/></linearGradient><filter id="kf4" x="-50%" y="-50%" width="200%" height="200%"><feGaussianBlur stdDeviation="2.2"/></filter></defs><circle cx="0" cy="4" r="31.2" fill="#a3a3a3" filter="url(#kf4)"/><circle cx="0" cy="0" r="30.7" fill="none" stroke="#a8a8a8" stroke-width="6.2"/><path d="M-15.35,26.59 A30.7,30.7 0 1 1 30.40,4.27" fill="none" stroke="#06a6d3" stroke-width="6.2"/><circle cx="0" cy="0" r="25.599999999999998" fill="none" stroke="#d9d9d9" stroke-width="3"/><circle cx="0" cy="0" r="23.9" fill="none" stroke="#a0a0a0" stroke-width="1.3"/><circle cx="0" cy="0" r="23.4" fill="url(#kg4)"/><line x1="5.89" y1="1.14" x2="21.10" y2="4.10" stroke="#2a2a2a" stroke-width="5.5"/><line x1="5.89" y1="1.14" x2="21.10" y2="4.10" stroke="#ececec" stroke-width="4"/></svg>
<svg style="left:1444.0px;top:1101.0px" width="100" height="100" viewBox="-50.0 -50.0 100 100"><defs><linearGradient id="kg5" x1="0" y1="0" x2="0" y2="1"><stop offset="0" stop-color="#575757"/><stop offset="1" stop-color="#434343"/></linearGradient><filter id="kf5" x="-50%" y="-50%" width="200%" height="200%"><feGaussianBlur stdDeviation="2.2"/></filter></defs><circle cx="0" cy="4" r="31.2" fill="#a3a3a3" filter="url(#kf5)"/><circle cx="0" cy="0" r="30.7" fill="none" stroke="#a8a8a8" stroke-width="6.2"/><path d="M-15.35,26.59 A30.7,30.7 0 1 1 30.70,-0.00" fill="none" stroke="#06a6d3" stroke-width="6.2"/><circle cx="0" cy="0" r="25.599999999999998" fill="none" stroke="#d9d9d9" stroke-width="3"/><circle cx="0" cy="0" r="23.9" fill="none" stroke="#a0a0a0" stroke-width="1.3"/><circle cx="0" cy="0" r="23.4" fill="url(#kg5)"/><line x1="6.00" y1="0.10" x2="21.50" y2="0.38" stroke="#2a2a2a" stroke-width="5.5"/><line x1="6.00" y1="0.10" x2="21.50" y2="0.38" stroke="#ececec" stroke-width="4"/></svg>
<svg style="left:1054.0px;top:1275.0px" width="100" height="100" viewBox="-50.0 -50.0 100 100"><defs><linearGradient id="kg6" x1="0" y1="0" x2="0" y2="1"><stop offset="0" stop-color="#575757"/><stop offset="1" stop-color="#434343"/></linearGradient><filter id="kf6" x="-50%" y="-50%" width="200%" height="200%"><feGaussianBlur stdDeviation="2.2"/></filter></defs><circle cx="0" cy="4" r="31.2" fill="#a3a3a3" filter="url(#kf6)"/><circle cx="0" cy="0" r="30.7" fill="none" stroke="#a8a8a8" stroke-width="6.2"/><path d="M-15.35,26.59 A30.7,30.7 0 0 1 12.49,-28.05" fill="none" stroke="#06a6d3" stroke-width="6.2"/><circle cx="0" cy="0" r="25.599999999999998" fill="none" stroke="#d9d9d9" stroke-width="3"/><circle cx="0" cy="0" r="23.9" fill="none" stroke="#a0a0a0" stroke-width="1.3"/><circle cx="0" cy="0" r="23.4" fill="url(#kg6)"/><line x1="2.91" y1="-5.25" x2="10.42" y2="-18.80" stroke="#2a2a2a" stroke-width="5.5"/><line x1="2.91" y1="-5.25" x2="10.42" y2="-18.80" stroke="#ececec" stroke-width="4"/></svg>
<svg style="left:1184.0px;top:1275.0px" width="100" height="100" viewBox="-50.0 -50.0 100 100"><defs><linearGradient id="kg7" x1="0" y1="0" x2="0" y2="1"><stop offset="0" stop-color="#575757"/><stop offset="1" stop-color="#434343"/></linearGradient><filter id="kf7" x="-50%" y="-50%" width="200%" height="200%"><feGaussianBlur stdDeviation="2.2"/></filter></defs><circle cx="0" cy="4" r="31.2" fill="#a3a3a3" filter="url(#kf7)"/><circle cx="0" cy="0" r="30.7" fill="none" stroke="#a8a8a8" stroke-width="6.2"/><path d="M-15.35,26.59 A30.7,30.7 0 1 1 24.52,-18.48" fill="none" stroke="#06a6d3" stroke-width="6.2"/><circle cx="0" cy="0" r="25.599999999999998" fill="none" stroke="#d9d9d9" stroke-width="3"/><circle cx="0" cy="0" r="23.9" fill="none" stroke="#a0a0a0" stroke-width="1.3"/><circle cx="0" cy="0" r="23.4" fill="url(#kg7)"/><line x1="5.03" y1="-3.27" x2="18.03" y2="-11.71" stroke="#2a2a2a" stroke-width="5.5"/><line x1="5.03" y1="-3.27" x2="18.03" y2="-11.71" stroke="#ececec" stroke-width="4"/></svg>
<svg style="left:1444.0px;top:1275.0px" width="100" height="100" viewBox="-50.0 -50.0 100 100"><defs><linearGradient id="kg8" x1="0" y1="0" x2="0" y2="1"><stop offset="0" stop-color="#575757"/><stop offset="1" stop-color="#434343"/></linearGradient><filter id="kf8" x="-50%" y="-50%" width="200%" height="200%"><feGaussianBlur stdDeviation="2.2"/></filter></defs><circle cx="0" cy="4" r="31.2" fill="#a3a3a3" filter="url(#kf8)"/><circle cx="0" cy="0" r="30.7" fill="none" stroke="#a8a8a8" stroke-width="6.2"/><path d="M-15.35,26.59 A30.7,30.7 0 0 1 0.00,-30.70" fill="none" stroke="#06a6d3" stroke-width="6.2"/><circle cx="0" cy="0" r="25.599999999999998" fill="none" stroke="#d9d9d9" stroke-width="3"/><circle cx="0" cy="0" r="23.9" fill="none" stroke="#a0a0a0" stroke-width="1.3"/><circle cx="0" cy="0" r="23.4" fill="url(#kg8)"/><line x1="0.00" y1="-6.00" x2="0.00" y2="-21.50" stroke="#2a2a2a" stroke-width="5.5"/><line x1="0.00" y1="-6.00" x2="0.00" y2="-21.50" stroke="#ececec" stroke-width="4"/></svg>
<svg style="left:2074.0px;top:1100.0px" width="100" height="100" viewBox="-50.0 -50.0 100 100"><defs><linearGradient id="kg9" x1="0" y1="0" x2="0" y2="1"><stop offset="0" stop-color="#575757"/><stop offset="1" stop-color="#434343"/></linearGradient><filter id="kf9" x="-50%" y="-50%" width="200%" height="200%"><feGaussianBlur stdDeviation="2.2"/></filter></defs><circle cx="0" cy="4" r="31.2" fill="#a3a3a3" filter="url(#kf9)"/><circle cx="0" cy="0" r="30.7" fill="none" stroke="#a8a8a8" stroke-width="6.2"/><circle cx="0" cy="0" r="25.599999999999998" fill="none" stroke="#d9d9d9" stroke-width="3"/><circle cx="0" cy="0" r="23.9" fill="none" stroke="#a0a0a0" stroke-width="1.3"/><circle cx="0" cy="0" r="23.4" fill="url(#kg9)"/><line x1="-2.91" y1="5.25" x2="-10.42" y2="18.80" stroke="#2a2a2a" stroke-width="5.5"/><line x1="-2.91" y1="5.25" x2="-10.42" y2="18.80" stroke="#ececec" stroke-width="4"/></svg>
<svg style="left:2174.0px;top:1100.5px" width="100" height="100" viewBox="-50.0 -50.0 100 100"><defs><linearGradient id="kg10" x1="0" y1="0" x2="0" y2="1"><stop offset="0" stop-color="#575757"/><stop offset="1" stop-color="#434343"/></linearGradient><filter id="kf10" x="-50%" y="-50%" width="200%" height="200%"><feGaussianBlur stdDeviation="2.2"/></filter></defs><circle cx="0" cy="4" r="31.2" fill="#a3a3a3" filter="url(#kf10)"/><circle cx="0" cy="0" r="30.7" fill="none" stroke="#a8a8a8" stroke-width="6.2"/><path d="M-15.35,26.59 A30.7,30.7 0 1 1 29.20,9.49" fill="none" stroke="#06a6d3" stroke-width="6.2"/><circle cx="0" cy="0" r="25.599999999999998" fill="none" stroke="#d9d9d9" stroke-width="3"/><circle cx="0" cy="0" r="23.9" fill="none" stroke="#a0a0a0" stroke-width="1.3"/><circle cx="0" cy="0" r="23.4" fill="url(#kg10)"/><line x1="5.71" y1="1.85" x2="20.45" y2="6.64" stroke="#2a2a2a" stroke-width="5.5"/><line x1="5.71" y1="1.85" x2="20.45" y2="6.64" stroke="#ececec" stroke-width="4"/></svg>
<svg style="left:2074.0px;top:1274.5px" width="100" height="100" viewBox="-50.0 -50.0 100 100"><defs><linearGradient id="kg11" x1="0" y1="0" x2="0" y2="1"><stop offset="0" stop-color="#575757"/><stop offset="1" stop-color="#434343"/></linearGradient><filter id="kf11" x="-50%" y="-50%" width="200%" height="200%"><feGaussianBlur stdDeviation="2.2"/></filter></defs><circle cx="0" cy="4" r="31.2" fill="#a3a3a3" filter="url(#kf11)"/><circle cx="0" cy="0" r="30.7" fill="none" stroke="#a8a8a8" stroke-width="6.2"/><path d="M-15.35,26.59 A30.7,30.7 0 1 1 17.17,25.45" fill="none" stroke="#06a6d3" stroke-width="6.2"/><circle cx="0" cy="0" r="25.599999999999998" fill="none" stroke="#d9d9d9" stroke-width="3"/><circle cx="0" cy="0" r="23.9" fill="none" stroke="#a0a0a0" stroke-width="1.3"/><circle cx="0" cy="0" r="23.4" fill="url(#kg11)"/><line x1="2.91" y1="5.25" x2="10.42" y2="18.80" stroke="#2a2a2a" stroke-width="5.5"/><line x1="2.91" y1="5.25" x2="10.42" y2="18.80" stroke="#ececec" stroke-width="4"/></svg>
<svg style="left:2174.0px;top:1274.5px" width="100" height="100" viewBox="-50.0 -50.0 100 100"><defs><linearGradient id="kg12" x1="0" y1="0" x2="0" y2="1"><stop offset="0" stop-color="#575757"/><stop offset="1" stop-color="#434343"/></linearGradient><filter id="kf12" x="-50%" y="-50%" width="200%" height="200%"><feGaussianBlur stdDeviation="2.2"/></filter></defs><circle cx="0" cy="4" r="31.2" fill="#a3a3a3" filter="url(#kf12)"/><circle cx="0" cy="0" r="30.7" fill="none" stroke="#a8a8a8" stroke-width="6.2"/><path d="M-15.35,26.59 A30.7,30.7 0 1 1 18.05,-24.84" fill="none" stroke="#06a6d3" stroke-width="6.2"/><circle cx="0" cy="0" r="25.599999999999998" fill="none" stroke="#d9d9d9" stroke-width="3"/><circle cx="0" cy="0" r="23.9" fill="none" stroke="#a0a0a0" stroke-width="1.3"/><circle cx="0" cy="0" r="23.4" fill="url(#kg12)"/><line x1="3.69" y1="-4.73" x2="13.24" y2="-16.94" stroke="#2a2a2a" stroke-width="5.5"/><line x1="3.69" y1="-4.73" x2="13.24" y2="-16.94" stroke="#ececec" stroke-width="4"/></svg>
<svg style="left:1314.0px;top:1275.0px" width="100" height="100" viewBox="-50.0 -50.0 100 100"><defs><linearGradient id="kg13" x1="0" y1="0" x2="0" y2="1"><stop offset="0" stop-color="#575757"/><stop offset="1" stop-color="#434343"/></linearGradient><filter id="kf13" x="-50%" y="-50%" width="200%" height="200%"><feGaussianBlur stdDeviation="2.2"/></filter></defs><circle cx="0" cy="4" r="31.2" fill="#a3a3a3" filter="url(#kf13)"/><circle cx="0" cy="0" r="30.7" fill="none" stroke="#a8a8a8" stroke-width="6.2"/><circle cx="0" cy="0" r="25.599999999999998" fill="none" stroke="#d9d9d9" stroke-width="3"/><circle cx="0" cy="0" r="23.9" fill="none" stroke="#a0a0a0" stroke-width="1.3"/><circle cx="0" cy="0" r="23.4" fill="url(#kg13)"/><line x1="-3.18" y1="5.09" x2="-11.39" y2="18.23" stroke="#2a2a2a" stroke-width="5.5"/><line x1="-3.18" y1="5.09" x2="-11.39" y2="18.23" stroke="#ececec" stroke-width="4"/><path d="M-25.17,31.09 A40,40 0 1 1 25.17,31.09" fill="none" stroke="#ff9a12" stroke-width="3.6"/><circle cx="-19.89" cy="35.16" r="4.3" fill="#fff"/></svg>
<div style="left:1576px;top:1139px;width:228px;height:228px;background:#020f19;border-radius:5px;"></div>
<div style="left:1689px;top:1139px;width:2px;height:24px;background:#1d2831;"></div>
<div style="left:1689px;top:1222px;width:2px;height:62px;background:#1d2831;"></div>
<div style="left:1689px;top:1343px;width:2px;height:24px;background:#1d2831;"></div>
<div style="left:1576px;top:1253px;width:24px;height:2px;background:#1d2831;"></div>
<div style="left:1658px;top:1253px;width:62px;height:2px;background:#1d2831;"></div>
<div style="left:1780px;top:1253px;width:24px;height:2px;background:#1d2831;"></div>
<div style="left:1657px;top:1224.5px;width:22px;height:22px;border-radius:50%;background:#3fb3e8;"></div>
<div style="left:1824px;top:1139px;width:228px;height:228px;background:#020f19;border-radius:5px;"></div>
<div style="left:1937px;top:1139px;width:2px;height:24px;background:#1d2831;"></div>
<div style="left:1937px;top:1222px;width:2px;height:62px;background:#1d2831;"></div>
<div style="left:1937px;top:1343px;width:2px;height:24px;background:#1d2831;"></div>
<div style="left:1824px;top:1253px;width:24px;height:2px;background:#1d2831;"></div>
<div style="left:1906px;top:1253px;width:62px;height:2px;background:#1d2831;"></div>
<div style="left:2028px;top:1253px;width:24px;height:2px;background:#1d2831;"></div>
<div style="left:1824px;top:1345px;width:22px;height:22px;border-radius:50%;background:#3fb3e8;"></div>
<div id="tx">
<div class="t" style="left:14.5px;top:28px;width:180px;text-align:center;font-size:23px;line-height:23px;color:#fff;transform-origin:50% 50%;transform:scaleX(0.957);">BROWSE</div>
<div class="t" style="left:195.2px;top:28px;width:178px;text-align:center;font-size:23px;line-height:23px;color:#fff;transform-origin:50% 50%;transform:scaleX(0.957);">SIMPLE</div>
<div class="t" style="left:376.5px;top:28px;width:178px;text-align:center;font-size:23px;line-height:23px;color:#fff;transform-origin:50% 50%;transform:scaleX(0.957);">ADVANCED</div>
<div class="t" style="left:705.0px;top:28px;width:536px;text-align:center;font-size:23px;line-height:23px;color:#fff;transform-origin:50% 50%;transform:scaleX(0.957);">Default</div>
<div class="t" style="left:1382.8px;top:28px;width:90px;text-align:center;font-size:23px;line-height:23px;color:#fff;transform-origin:50% 50%;transform:scaleX(0.957);">File</div>
<div class="t" style="left:1474.9px;top:28px;width:104px;text-align:center;font-size:23px;line-height:23px;color:#fff;transform-origin:50% 50%;transform:scaleX(0.957);">Save</div>
<div class="t" style="left:1580.3px;top:28px;width:136px;text-align:center;font-size:23px;line-height:23px;color:#fff;transform-origin:50% 50%;transform:scaleX(0.957);">Save As</div>
<div class="t" style="left:1764px;top:34px;font-size:18px;line-height:18px;color:#767a82;transform-origin:0 50%;transform:scaleX(0.985);-webkit-text-stroke:0.15px currentColor;">Quality</div>
<div class="t" style="left:1840px;top:28px;font-size:23px;line-height:23px;color:#fff;transform-origin:0 50%;transform:scaleX(0.957);">Great</div>
<div class="t" style="left:1972.0px;top:28px;width:108px;text-align:center;font-size:23px;line-height:23px;color:#fff;transform-origin:50% 50%;transform:scaleX(0.957);">Limiter</div>
<div class="t" style="left:2145px;top:31px;font-size:21px;line-height:21px;color:#1b1b1b;transform-origin:0 50%;transform:scaleX(0.93);-webkit-text-stroke:0.15px currentColor;">Vol</div>
<div class="t" style="left:39.5px;top:175px;font-size:23px;line-height:23px;color:#fff;transform-origin:0 50%;transform:scaleX(0.957);">All</div>
<div class="t" style="left:39.5px;top:215px;font-size:23px;line-height:23px;color:#e6e6e6;transform-origin:0 50%;transform:scaleX(0.957);">Arpeggiated</div>
<div class="t" style="left:39.5px;top:255px;font-size:23px;line-height:23px;color:#e6e6e6;transform-origin:0 50%;transform:scaleX(0.957);">Bass</div>
<div class="t" style="left:39.5px;top:295px;font-size:23px;line-height:23px;color:#e6e6e6;transform-origin:0 50%;transform:scaleX(0.957);">Brass</div>
<div class="t" style="left:39.5px;top:335px;font-size:23px;line-height:23px;color:#e6e6e6;transform-origin:0 50%;transform:scaleX(0.957);">Drums</div>
<div class="t" style="left:39.5px;top:375px;font-size:23px;line-height:23px;color:#e6e6e6;transform-origin:0 50%;transform:scaleX(0.957);">Guitars</div>
<div class="t" style="left:39.5px;top:415px;font-size:23px;line-height:23px;color:#e6e6e6;transform-origin:0 50%;transform:scaleX(0.957);">Keys</div>
<div class="t" style="left:39.5px;top:455px;font-size:23px;line-height:23px;color:#e6e6e6;transform-origin:0 50%;transform:scaleX(0.957);">Leads</div>
<div class="t" style="left:39.5px;top:495px;font-size:23px;line-height:23px;color:#e6e6e6;transform-origin:0 50%;transform:scaleX(0.957);">Mallets</div>
<div class="t" style="left:39.5px;top:535px;font-size:23px;line-height:23px;color:#e6e6e6;transform-origin:0 50%;transform:scaleX(0.957);">Organs</div>
<div class="t" style="left:39.5px;top:575px;font-size:23px;line-height:23px;color:#e6e6e6;transform-origin:0 50%;transform:scaleX(0.957);">Pads</div>
<div class="t" style="left:39.5px;top:615px;font-size:23px;line-height:23px;color:#e6e6e6;transform-origin:0 50%;transform:scaleX(0.957);">Rhythmic</div>
<div class="t" style="left:39.5px;top:655px;font-size:23px;line-height:23px;color:#e6e6e6;transform-origin:0 50%;transform:scaleX(0.957);">Sound Effects</div>
<div class="t" style="left:39.5px;top:695px;font-size:23px;line-height:23px;color:#e6e6e6;transform-origin:0 50%;transform:scaleX(0.957);">Soundscapes</div>
<div class="t" style="left:39.5px;top:735px;font-size:23px;line-height:23px;color:#e6e6e6;transform-origin:0 50%;transform:scaleX(0.957);">Strings</div>
<div class="t" style="left:39.5px;top:775px;font-size:23px;line-height:23px;color:#e6e6e6;transform-origin:0 50%;transform:scaleX(0.957);">Synths</div>
<div class="t" style="left:39.5px;top:815px;font-size:23px;line-height:23px;color:#e6e6e6;transform-origin:0 50%;transform:scaleX(0.957);">Vocals</div>
<div class="t" style="left:39.5px;top:855px;font-size:23px;line-height:23px;color:#e6e6e6;transform-origin:0 50%;transform:scaleX(0.957);">Woodwinds</div>
<div class="t" style="left:419.5px;top:175px;font-size:23px;line-height:23px;color:#fff;transform-origin:0 50%;transform:scaleX(0.957);">All</div>
<div class="t" style="left:419.5px;top:215px;font-size:23px;line-height:23px;color:#e6e6e6;transform-origin:0 50%;transform:scaleX(0.957);">Acoustic</div>
<div class="t" style="left:419.5px;top:255px;font-size:23px;line-height:23px;color:#e6e6e6;transform-origin:0 50%;transform:scaleX(0.957);">Analog</div>
<div class="t" style="left:419.5px;top:295px;font-size:23px;line-height:23px;color:#e6e6e6;transform-origin:0 50%;transform:scaleX(0.957);">Bass</div>
<div class="t" style="left:419.5px;top:335px;font-size:23px;line-height:23px;color:#e6e6e6;transform-origin:0 50%;transform:scaleX(0.957);">Bell</div>
<div class="t" style="left:419.5px;top:375px;font-size:23px;line-height:23px;color:#e6e6e6;transform-origin:0 50%;transform:scaleX(0.957);">Bowed</div>
<div class="t" style="left:419.5px;top:415px;font-size:23px;line-height:23px;color:#e6e6e6;transform-origin:0 50%;transform:scaleX(0.957);">Chaotic</div>
<div class="t" style="left:419.5px;top:455px;font-size:23px;line-height:23px;color:#e6e6e6;transform-origin:0 50%;transform:scaleX(0.957);">Choir</div>
<div class="t" style="left:419.5px;top:495px;font-size:23px;line-height:23px;color:#e6e6e6;transform-origin:0 50%;transform:scaleX(0.957);">Cinematic</div>
<div class="t" style="left:419.5px;top:535px;font-size:23px;line-height:23px;color:#e6e6e6;transform-origin:0 50%;transform:scaleX(0.957);">Classic</div>
<div class="t" style="left:419.5px;top:575px;font-size:23px;line-height:23px;color:#e6e6e6;transform-origin:0 50%;transform:scaleX(0.957);">Dance</div>
<div class="t" style="left:419.5px;top:615px;font-size:23px;line-height:23px;color:#e6e6e6;transform-origin:0 50%;transform:scaleX(0.957);">Digital</div>
<div class="t" style="left:419.5px;top:655px;font-size:23px;line-height:23px;color:#e6e6e6;transform-origin:0 50%;transform:scaleX(0.957);">Drone</div>
<div class="t" style="left:419.5px;top:695px;font-size:23px;line-height:23px;color:#e6e6e6;transform-origin:0 50%;transform:scaleX(0.957);">Drums</div>
<div class="t" style="left:419.5px;top:735px;font-size:23px;line-height:23px;color:#e6e6e6;transform-origin:0 50%;transform:scaleX(0.957);">Electric</div>
<div class="t" style="left:419.5px;top:775px;font-size:23px;line-height:23px;color:#e6e6e6;transform-origin:0 50%;transform:scaleX(0.957);">Electronic</div>
<div class="t" style="left:419.5px;top:815px;font-size:23px;line-height:23px;color:#e6e6e6;transform-origin:0 50%;transform:scaleX(0.957);">Ensemble</div>
<div class="t" style="left:419.5px;top:855px;font-size:23px;line-height:23px;color:#e6e6e6;transform-origin:0 50%;transform:scaleX(0.957);">Evolving</div>
<div class="t" style="left:799.5px;top:175px;font-size:23px;line-height:23px;color:#fff;transform-origin:0 50%;transform:scaleX(0.957);">All</div>
<div class="t" style="left:799.5px;top:215px;font-size:23px;line-height:23px;color:#e6e6e6;transform-origin:0 50%;transform:scaleX(0.957);">Ambient</div>
<div class="t" style="left:799.5px;top:255px;font-size:23px;line-height:23px;color:#e6e6e6;transform-origin:0 50%;transform:scaleX(0.957);">Downtempo</div>
<div class="t" style="left:799.5px;top:295px;font-size:23px;line-height:23px;color:#e6e6e6;transform-origin:0 50%;transform:scaleX(0.957);">Drum and Bass</div>
<div class="t" style="left:799.5px;top:335px;font-size:23px;line-height:23px;color:#e6e6e6;transform-origin:0 50%;transform:scaleX(0.957);">Dubstep</div>
<div class="t" style="left:799.5px;top:375px;font-size:23px;line-height:23px;color:#e6e6e6;transform-origin:0 50%;transform:scaleX(0.957);">Electronica</div>
<div class="t" style="left:799.5px;top:415px;font-size:23px;line-height:23px;color:#e6e6e6;transform-origin:0 50%;transform:scaleX(0.957);">Urban</div>
<div class="t" style="left:799.5px;top:455px;font-size:23px;line-height:23px;color:#e6e6e6;transform-origin:0 50%;transform:scaleX(0.957);">House</div>
<div class="t" style="left:799.5px;top:495px;font-size:23px;line-height:23px;color:#e6e6e6;transform-origin:0 50%;transform:scaleX(0.957);">Industrial</div>
<div class="t" style="left:799.5px;top:535px;font-size:23px;line-height:23px;color:#e6e6e6;transform-origin:0 50%;transform:scaleX(0.957);">Pop</div>
<div class="t" style="left:799.5px;top:575px;font-size:23px;line-height:23px;color:#e6e6e6;transform-origin:0 50%;transform:scaleX(0.957);">Rock</div>
<div class="t" style="left:799.5px;top:615px;font-size:23px;line-height:23px;color:#e6e6e6;transform-origin:0 50%;transform:scaleX(0.957);">Soundtrack</div>
<div class="t" style="left:799.5px;top:655px;font-size:23px;line-height:23px;color:#e6e6e6;transform-origin:0 50%;transform:scaleX(0.957);">Techno</div>
<div class="t" style="left:799.5px;top:695px;font-size:23px;line-height:23px;color:#e6e6e6;transform-origin:0 50%;transform:scaleX(0.957);">Trance</div>
<div class="t" style="left:799.5px;top:735px;font-size:23px;line-height:23px;color:#e6e6e6;transform-origin:0 50%;transform:scaleX(0.957);">Electro</div>
<div class="t" style="left:799.5px;top:775px;font-size:23px;line-height:23px;color:#e6e6e6;transform-origin:0 50%;transform:scaleX(0.957);">Funk</div>
<div class="t" style="left:799.5px;top:815px;font-size:23px;line-height:23px;color:#e6e6e6;transform-origin:0 50%;transform:scaleX(0.957);">Jazz</div>
<div class="t" style="left:799.5px;top:855px;font-size:23px;line-height:23px;color:#e6e6e6;transform-origin:0 50%;transform:scaleX(0.957);">Orchestral</div>
<div class="t" style="left:1179.5px;top:175px;font-size:23px;line-height:23px;color:#fff;transform-origin:0 50%;transform:scaleX(0.957);">All</div>
<div class="t" style="left:1179.5px;top:215px;font-size:23px;line-height:23px;color:#e6e6e6;transform-origin:0 50%;transform:scaleX(0.957);">Simple</div>
<div class="t" style="left:1179.5px;top:255px;font-size:23px;line-height:23px;color:#e6e6e6;transform-origin:0 50%;transform:scaleX(0.957);">Complex</div>
<div class="t" style="left:1179.5px;top:295px;font-size:23px;line-height:23px;color:#e6e6e6;transform-origin:0 50%;transform:scaleX(0.957);">Clean</div>
<div class="t" style="left:1179.5px;top:335px;font-size:23px;line-height:23px;color:#e6e6e6;transform-origin:0 50%;transform:scaleX(0.957);">Distorted</div>
<div class="t" style="left:1179.5px;top:375px;font-size:23px;line-height:23px;color:#e6e6e6;transform-origin:0 50%;transform:scaleX(0.957);">Bright</div>
<div class="t" style="left:1179.5px;top:415px;font-size:23px;line-height:23px;color:#e6e6e6;transform-origin:0 50%;transform:scaleX(0.957);">Dark</div>
<div class="t" style="left:1179.5px;top:455px;font-size:23px;line-height:23px;color:#e6e6e6;transform-origin:0 50%;transform:scaleX(0.957);">Thin</div>
<div class="t" style="left:1179.5px;top:495px;font-size:23px;line-height:23px;color:#e6e6e6;transform-origin:0 50%;transform:scaleX(0.957);">Phat</div>
<div class="t" style="left:1179.5px;top:535px;font-size:23px;line-height:23px;color:#e6e6e6;transform-origin:0 50%;transform:scaleX(0.957);">Nice</div>
<div class="t" style="left:1179.5px;top:575px;font-size:23px;line-height:23px;color:#e6e6e6;transform-origin:0 50%;transform:scaleX(0.957);">Nasty</div>
<div class="t" style="left:1179.5px;top:615px;font-size:23px;line-height:23px;color:#e6e6e6;transform-origin:0 50%;transform:scaleX(0.957);">Organic</div>
<div class="t" style="left:1179.5px;top:655px;font-size:23px;line-height:23px;color:#e6e6e6;transform-origin:0 50%;transform:scaleX(0.957);">Metallic</div>
<div class="t" style="left:1179.5px;top:695px;font-size:23px;line-height:23px;color:#e6e6e6;transform-origin:0 50%;transform:scaleX(0.957);">Smooth</div>
<div class="t" style="left:1179.5px;top:735px;font-size:23px;line-height:23px;color:#e6e6e6;transform-origin:0 50%;transform:scaleX(0.957);">Glitchy</div>
<div class="t" style="left:1179.5px;top:775px;font-size:23px;line-height:23px;color:#e6e6e6;transform-origin:0 50%;transform:scaleX(0.957);">Warm</div>
<div class="t" style="left:1179.5px;top:815px;font-size:23px;line-height:23px;color:#e6e6e6;transform-origin:0 50%;transform:scaleX(0.957);">Cold</div>
<div class="t" style="left:1179.5px;top:855px;font-size:23px;line-height:23px;color:#e6e6e6;transform-origin:0 50%;transform:scaleX(0.957);">Noisy</div>
<div class="t" style="left:1719px;top:175px;font-size:23px;line-height:23px;color:#e6e6e6;transform-origin:0 50%;transform:scaleX(0.957);">1970s Analog Arp</div>
<div class="t" style="left:1719px;top:215px;font-size:23px;line-height:23px;color:#e6e6e6;transform-origin:0 50%;transform:scaleX(0.957);">70s Classic Synth Bass</div>
<div class="t" style="left:1719px;top:255px;font-size:23px;line-height:23px;color:#e6e6e6;transform-origin:0 50%;transform:scaleX(0.957);">70s Synth Arp</div>
<div class="t" style="left:1719px;top:295px;font-size:23px;line-height:23px;color:#e6e6e6;transform-origin:0 50%;transform:scaleX(0.957);">80s FM Bass Attack</div>
<div class="t" style="left:1719px;top:335px;font-size:23px;line-height:23px;color:#e6e6e6;transform-origin:0 50%;transform:scaleX(0.957);">80s Sync Lead</div>
<div class="t" style="left:1719px;top:375px;font-size:23px;line-height:23px;color:#e6e6e6;transform-origin:0 50%;transform:scaleX(0.957);">Acid Etched Bass</div>
<div class="t" style="left:1719px;top:415px;font-size:23px;line-height:23px;color:#e6e6e6;transform-origin:0 50%;transform:scaleX(0.957);">Agile Synth Bass</div>
<div class="t" style="left:1719px;top:455px;font-size:23px;line-height:23px;color:#e6e6e6;transform-origin:0 50%;transform:scaleX(0.957);">Alien Space Probe</div>
<div class="t" style="left:1719px;top:495px;font-size:23px;line-height:23px;color:#e6e6e6;transform-origin:0 50%;transform:scaleX(0.957);">Almost Piano Arpeggiation</div>
<div class="t" style="left:1719px;top:535px;font-size:23px;line-height:23px;color:#e6e6e6;transform-origin:0 50%;transform:scaleX(0.957);">Ambient Guitar Landscape</div>
<div class="t" style="left:1719px;top:575px;font-size:23px;line-height:23px;color:#e6e6e6;transform-origin:0 50%;transform:scaleX(0.957);">Analog Bass Sequence</div>
<div class="t" style="left:1719px;top:615px;font-size:23px;line-height:23px;color:#e6e6e6;transform-origin:0 50%;transform:scaleX(0.957);">Analog Bass Twister</div>
<div class="t" style="left:1719px;top:655px;font-size:23px;line-height:23px;color:#e6e6e6;transform-origin:0 50%;transform:scaleX(0.957);">Analog Bubbles</div>
<div class="t" style="left:1719px;top:695px;font-size:23px;line-height:23px;color:#e6e6e6;transform-origin:0 50%;transform:scaleX(0.957);">Analog Stack Synth</div>
<div class="t" style="left:1719px;top:735px;font-size:23px;line-height:23px;color:#e6e6e6;transform-origin:0 50%;transform:scaleX(0.957);">Animated Swirls</div>
<div class="t" style="left:1719px;top:775px;font-size:23px;line-height:23px;color:#e6e6e6;transform-origin:0 50%;transform:scaleX(0.957);">Antarctic Sun</div>
<div class="t" style="left:1719px;top:815px;font-size:23px;line-height:23px;color:#e6e6e6;transform-origin:0 50%;transform:scaleX(0.957);">Anthem Chord Arp</div>
<div class="t" style="left:1719px;top:855px;font-size:23px;line-height:23px;color:#e6e6e6;transform-origin:0 50%;transform:scaleX(0.957);">Anthemic Sync Lead</div>
<div class="t" style="left:25.30000000000001px;top:125px;width:300px;text-align:center;font-size:23px;line-height:23px;color:#fff;transform-origin:50% 50%;transform:scaleX(0.957);">Category</div>
<div class="t" style="left:407.5px;top:125px;width:300px;text-align:center;font-size:23px;line-height:23px;color:#fff;transform-origin:50% 50%;transform:scaleX(0.957);">Subcategory</div>
<div class="t" style="left:780.0px;top:125px;width:300px;text-align:center;font-size:23px;line-height:23px;color:#fff;transform-origin:50% 50%;transform:scaleX(0.957);">Genre</div>
<div class="t" style="left:1160.5px;top:125px;width:300px;text-align:center;font-size:23px;line-height:23px;color:#fff;transform-origin:50% 50%;transform:scaleX(0.957);">Timbre</div>
<div class="t" style="left:1550px;top:126px;font-size:23px;line-height:23px;color:#fff;transform-origin:0 50%;transform:scaleX(0.957);">Rating</div>
<div class="t" style="left:1719px;top:126px;font-size:23px;line-height:23px;color:#fff;transform-origin:0 50%;transform:scaleX(0.957);">Preset</div>
<div class="t" style="left:2113px;top:128px;font-size:23px;line-height:23px;color:#fff;transform-origin:0 50%;transform:scaleX(0.957);">300 Presets</div>
<div class="t" style="left:51px;top:916px;font-size:23px;line-height:23px;color:#fff;transform-origin:0 50%;transform:scaleX(0.957);">Comments</div>
<div class="t" style="left:52px;top:943px;font-size:25px;line-height:25px;color:#8c8f95;transform-origin:0 50%;transform:scaleX(0.962);">Aftertouch introduces filtering and rhythmic gating.</div>
<div class="t" style="left:1084px;top:916px;font-size:23px;line-height:23px;color:#fff;transform-origin:0 50%;transform:scaleX(0.957);">User Tags</div>
<div class="t" style="left:1598.5px;top:924px;width:158px;text-align:center;font-size:23px;line-height:23px;color:#fff;transform-origin:50% 50%;transform:scaleX(0.957);">User Tags</div>
<div class="t" style="left:1600.0px;top:982px;width:158px;text-align:center;font-size:23px;line-height:23px;color:#fff;transform-origin:50% 50%;transform:scaleX(0.957);">Edit</div>
<div class="t" style="left:1851px;top:916px;font-size:23px;line-height:23px;color:#fff;transform-origin:0 50%;transform:scaleX(0.957);">Search</div>
<div class="t" style="left:12px;top:1068px;font-size:23px;line-height:23px;color:#6a6f77;transform-origin:0 50%;transform:scaleX(0.957);-webkit-text-stroke:0.15px currentColor;">PERFORM</div>
<div class="t" style="left:12px;top:1146px;font-size:23px;line-height:23px;color:#fff;transform-origin:0 50%;transform:scaleX(0.957);">ARP</div>
<div class="t" style="left:12px;top:1224px;font-size:23px;line-height:23px;color:#fff;transform-origin:0 50%;transform:scaleX(0.957);">EFFECTS</div>
<div class="t" style="left:172.0px;top:1139px;width:206px;text-align:center;font-size:23px;line-height:23px;color:#fff;transform-origin:50% 50%;transform:scaleX(0.957);">Bright Synth</div>
<div class="t" style="left:382.0px;top:1139px;width:206px;text-align:center;font-size:23px;line-height:23px;color:#fff;transform-origin:50% 50%;transform:scaleX(0.957);">Epic Synth</div>
<div class="t" style="left:592.0px;top:1139px;width:206px;text-align:center;font-size:23px;line-height:23px;color:#fff;transform-origin:50% 50%;transform:scaleX(0.957);">Metallic Swell</div>
<div class="t" style="left:802.0px;top:1139px;width:206px;text-align:center;font-size:23px;line-height:23px;color:#fff;transform-origin:50% 50%;transform:scaleX(0.957);">Motion Pad</div>
<div class="t" style="left:172.0px;top:1286px;width:206px;text-align:center;font-size:23px;line-height:23px;color:#fff;transform-origin:50% 50%;transform:scaleX(0.957);">Synth Pluck</div>
<div class="t" style="left:382.0px;top:1286px;width:206px;text-align:center;font-size:23px;line-height:23px;color:#fff;transform-origin:50% 50%;transform:scaleX(0.957);">Minimal Arp</div>
<div class="t" style="left:592.0px;top:1286px;width:206px;text-align:center;font-size:23px;line-height:23px;color:#fff;transform-origin:50% 50%;transform:scaleX(0.957);">Dark Arp</div>
<div class="t" style="left:802.0px;top:1286px;width:206px;text-align:center;font-size:23px;line-height:23px;color:#fff;transform-origin:50% 50%;transform:scaleX(0.957);">Bright Arp</div>
<div class="t" style="left:312.0px;top:1398px;width:93px;text-align:center;font-size:23px;line-height:23px;color:#fff;transform-origin:50% 50%;transform:scaleX(0.957);">Off</div>
<div class="t" style="left:472.0px;top:1398px;width:113px;text-align:center;font-size:23px;line-height:23px;color:#fff;transform-origin:50% 50%;transform:scaleX(0.957);">Off</div>
<div class="t" style="left:652.0px;top:1398px;width:153px;text-align:center;font-size:23px;line-height:23px;color:#fff;transform-origin:50% 50%;transform:scaleX(0.957);">Control7</div>
<div class="t" style="left:872.0px;top:1398px;width:117px;text-align:center;font-size:23px;line-height:23px;color:#fff;transform-origin:50% 50%;transform:scaleX(0.957);">-15.8 dB</div>
<div class="t" style="left:316px;top:1436px;font-size:20px;line-height:20px;color:#747981;transform-origin:0 50%;transform:scaleX(0.88);-webkit-text-stroke:0.15px currentColor;">Octave</div>
<div class="t" style="left:476px;top:1436px;font-size:20px;line-height:20px;color:#747981;transform-origin:0 50%;transform:scaleX(0.88);-webkit-text-stroke:0.15px currentColor;">Rate</div>
<div class="t" style="left:656px;top:1436px;font-size:20px;line-height:20px;color:#747981;transform-origin:0 50%;transform:scaleX(0.88);-webkit-text-stroke:0.15px currentColor;">ModWheel</div>
<div class="t" style="left:876px;top:1436px;font-size:20px;line-height:20px;color:#747981;transform-origin:0 50%;transform:scaleX(0.88);-webkit-text-stroke:0.15px currentColor;">Snap Vol</div>
<div class="t" style="left:1024.0px;top:1198px;width:160px;text-align:center;font-size:21px;line-height:21px;color:#222;transform-origin:50% 50%;transform:scaleX(0.95);-webkit-text-stroke:0.15px currentColor;">Delay</div>
<div class="t" style="left:1154.0px;top:1198px;width:160px;text-align:center;font-size:21px;line-height:21px;color:#222;transform-origin:50% 50%;transform:scaleX(0.95);-webkit-text-stroke:0.15px currentColor;">Cutoff</div>
<div class="t" style="left:1284.0px;top:1198px;width:160px;text-align:center;font-size:21px;line-height:21px;color:#222;transform-origin:50% 50%;transform:scaleX(0.95);-webkit-text-stroke:0.15px currentColor;">Filter Env</div>
<div class="t" style="left:1414.0px;top:1198px;width:160px;text-align:center;font-size:21px;line-height:21px;color:#222;transform-origin:50% 50%;transform:scaleX(0.95);-webkit-text-stroke:0.15px currentColor;">Unison</div>
<div class="t" style="left:1024.0px;top:1372px;width:160px;text-align:center;font-size:21px;line-height:21px;color:#222;transform-origin:50% 50%;transform:scaleX(0.95);-webkit-text-stroke:0.15px currentColor;">Reverb</div>
<div class="t" style="left:1154.0px;top:1372px;width:160px;text-align:center;font-size:21px;line-height:21px;color:#222;transform-origin:50% 50%;transform:scaleX(0.95);-webkit-text-stroke:0.15px currentColor;">Resonance</div>
<div class="t" style="left:1414.0px;top:1372px;width:160px;text-align:center;font-size:21px;line-height:21px;color:#222;transform-origin:50% 50%;transform:scaleX(0.95);-webkit-text-stroke:0.15px currentColor;">Character</div>
<div class="t" style="left:2044.0px;top:1197px;width:160px;text-align:center;font-size:21px;line-height:21px;color:#222;transform-origin:50% 50%;transform:scaleX(0.95);-webkit-text-stroke:0.15px currentColor;">Attack</div>
<div class="t" style="left:2144.0px;top:1197px;width:160px;text-align:center;font-size:21px;line-height:21px;color:#222;transform-origin:50% 50%;transform:scaleX(0.95);-webkit-text-stroke:0.15px currentColor;">Decay</div>
<div class="t" style="left:2044.0px;top:1371px;width:160px;text-align:center;font-size:21px;line-height:21px;color:#222;transform-origin:50% 50%;transform:scaleX(0.95);-webkit-text-stroke:0.15px currentColor;">Sustain</div>
<div class="t" style="left:2144.0px;top:1371px;width:160px;text-align:center;font-size:21px;line-height:21px;color:#222;transform-origin:50% 50%;transform:scaleX(0.95);-webkit-text-stroke:0.15px currentColor;">Release</div>
<div class="t" style="left:1284.0px;top:1372px;width:160px;text-align:center;font-size:21px;line-height:21px;color:#222;transform-origin:50% 50%;transform:scaleX(0.95);-webkit-text-stroke:0.15px currentColor;">Movement</div>
<div class="t" style="left:1580px;top:1101px;font-size:21px;line-height:21px;color:#222;transform-origin:0 50%;transform:scaleX(0.95);-webkit-text-stroke:0.15px currentColor;">X1: Saw / Square</div>
<div class="t" style="left:1828px;top:1101px;font-size:21px;line-height:21px;color:#222;transform-origin:0 50%;transform:scaleX(0.95);-webkit-text-stroke:0.15px currentColor;">X2: ArpRate</div>
<div class="t" style="left:1504px;top:1385px;width:300px;text-align:right;font-size:21px;line-height:21px;color:#222;transform-origin:100% 50%;transform:scaleX(0.95);-webkit-text-stroke:0.15px currentColor;">Y1: Sine / Comb</div>
<div class="t" style="left:1752px;top:1385px;width:300px;text-align:right;font-size:21px;line-height:21px;color:#222;transform-origin:100% 50%;transform:scaleX(0.95);-webkit-text-stroke:0.15px currentColor;">Y2: ArpMode</div>
</div>
</body></html>
